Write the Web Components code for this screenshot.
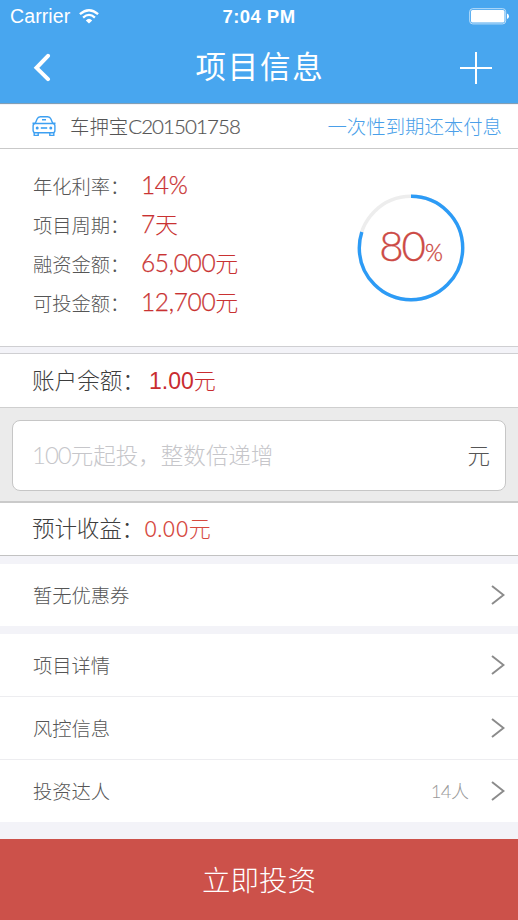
<!DOCTYPE html>
<html lang="zh-CN">
<head>
<meta charset="utf-8">
<title>项目信息</title>
<style>
body{margin:0;background:#f3f3f8;font-family:"Noto Sans CJK SC",sans-serif;font-weight:300;color:#555;overflow:hidden}
</style>
</head>
<body>
<invest-page></invest-page>
<script>
function define(name, html){
  const t=document.createElement('template');t.innerHTML=html;
  customElements.define(name,class extends HTMLElement{
    constructor(){super();this.attachShadow({mode:'open'}).appendChild(t.content.cloneNode(true));}
    connectedCallback(){
      this.shadowRoot.querySelectorAll('[data-attr]').forEach(e=>{e.textContent=this.getAttribute(e.dataset.attr)||'';});
    }
  });
}
define('status-bar',`<style>
:host{display:grid;grid-template-columns:1fr auto 1fr;align-items:center;height:33px;color:#fff;font-family:"Liberation Sans",sans-serif}
.l{display:flex;align-items:center;gap:9px;padding-left:10px;font-size:19.5px;font-weight:400}
.l span{letter-spacing:.1px}
.t{font-size:18.5px;font-weight:700;letter-spacing:.45px}
.b{justify-self:end;margin-right:8px;display:block}
svg{display:block}
</style>
<div class="l"><span>Carrier</span><svg width="20" height="15" viewBox="0 0 20 15" fill="none" stroke="#fff" stroke-width="2.3"><path d="M.9 5.2Q10-2.8 19.1 5.2M4.1 8.6Q10 3.2 15.9 8.6"/><path d="M6.8 11.4Q10 8.2 13.2 11.4L10 14.6Z" fill="#fff" stroke="none"/></svg></div>
<span class="t">7:04 PM</span>
<svg class="b" width="41" height="17" viewBox="0 0 41 17"><rect x=".7" y=".7" width="36" height="15.2" rx="3" fill="none" stroke="#bfe0fa" stroke-width="1"/><rect x="2" y="2" width="33.5" height="12.5" rx="1.5" fill="#fff"/><path d="M38 5.5Q40 6 40 8.2T38 11Z" fill="#fff"/></svg>`);
define('nav-bar',`<style>
:host{display:grid;grid-template-columns:1fr auto 1fr;align-items:center;height:70px;color:#fff}
.h{font-size:30.5px;font-weight:400;letter-spacing:1.8px;line-height:64px;height:70px;margin-right:-2px}
svg{display:block}.b{margin-left:32px}.p{justify-self:end;margin-right:26px}
</style>
<svg class="b" width="20" height="30" viewBox="0 0 20 30" fill="none" stroke="#fff" stroke-width="4" stroke-linecap="round" stroke-linejoin="miter"><path d="M16 2.8 4.5 14.8 16 26.2"/></svg>
<span class="h"><slot></slot></span>
<svg class="p" width="32" height="32" viewBox="0 0 32 32" stroke="#fff" stroke-width="2"><path d="M0 16h32M16 0v32"/></svg>`);
define('project-title',`<style>
:host{display:flex;align-items:center;height:43px;box-sizing:content-box;background:#fff;border-bottom:1px solid #c9c9c9;padding:0 16px 0 32px;font-size:19.4px}
.n,.r{margin-top:-2px}.n{margin-left:14px}.d{font-family:Lato,sans-serif;font-size:20.5px;letter-spacing:-.9px;font-weight:300;-webkit-text-stroke:.2px}
.r{margin-left:auto;color:#4a9fe9}svg{display:block}
</style>
<svg width="24" height="21" viewBox="0 0 24 21" fill="none" stroke="#3da0f2" stroke-width="1.4"><path d="M3.2 7.5 5.1 3Q6 .8 8.3.8h7.4Q18 .8 18.9 3l1.9 4.5M.5 7.2h2.4M21.1 7.2h2.4"/><rect x="1.1" y="7.5" width="21.8" height="9.3" rx="2.2"/><path d="M2.2 17v2.4h4V17M17.8 17v2.4h4V17M10 3.7h4"/><path d="M8.8 12h6.4" stroke-width="1.6"/><circle cx="5.2" cy="12" r=".8"/><circle cx="18.8" cy="12" r=".8"/></svg>
<span class="n">车押宝<span class="d">C201501758</span></span><span class="r">一次性到期还本付息</span>`);
define('detail-item',`<style>
:host{display:grid;grid-template-columns:108px 1fr;height:39px;align-items:center;font-size:19.3px;line-height:39px}
.v{color:#c93232;font-size:23px;margin-top:-4px}
::slotted(b){font-family:Lato,sans-serif;font-weight:300;font-size:24.5px;letter-spacing:-.35px;-webkit-text-stroke:.25px}
</style><span data-attr="label"></span><span class="v"><slot></slot></span>`);
define('progress-ring',`<style>
:host{display:grid;width:108px;height:108px;place-items:center}
svg,.t{grid-area:1/1}svg{display:block}
.t{color:#cc4a45;font-family:Lato,sans-serif;font-weight:300;font-size:42px;line-height:1;letter-spacing:-2px;margin-top:-6px;white-space:nowrap;-webkit-text-stroke:.35px}
small{font-size:23px;letter-spacing:0;margin-left:1px}
</style><svg width="108" height="108" viewBox="0 0 108 108" fill="none" stroke-width="3.4"><circle cx="54" cy="54" r="51.7" stroke="#ededed"/><circle cx="54" cy="54" r="51.7" stroke="#2c9bf6" pathLength="100" stroke-dasharray="80 20" transform="rotate(-90 54 54)"/></svg><span class="t">80<small>%</small></span>`);
define('project-details',`<style>
:host{display:flex;justify-content:space-between;box-sizing:border-box;height:198px;background:#fff;border-bottom:1px solid #cfcfd2;padding:18px 53px 0 33px}
.ring{padding-top:27px}
</style><div>
<detail-item label="年化利率："><b>14%</b></detail-item>
<detail-item label="项目周期："><b>7</b>天</detail-item>
<detail-item label="融资金额："><b>65,000</b>元</detail-item>
<detail-item label="可投金额："><b>12,700</b>元</detail-item></div>
<div class="ring"><progress-ring></progress-ring></div>`);
define('amount-row',`<style>
:host{display:flex;align-items:center;box-sizing:border-box;height:54px;background:#fff;padding:0 0 2px 32px;font-size:22.6px;color:#3d3d3d;line-height:50px}
.l{width:var(--label,117px);letter-spacing:var(--ls,0);white-space:nowrap}.v{color:var(--value,#c92c30);font-size:22px}
::slotted(b){font-family:var(--num,"Liberation Sans"),sans-serif;font-weight:var(--w,400);font-size:var(--fs,23px)}
</style><span class="l" data-attr="label"></span><span class="v"><slot></slot></span>`);
define('amount-input',`<style>
:host{display:block;box-sizing:border-box;height:96px;background:#ebebeb;border-top:1px solid #cfcfcf;border-bottom:2px solid #cacaca;padding:12px 12px 0 12px}
.f{display:flex;justify-content:space-between;align-items:center;box-sizing:border-box;height:71px;background:#fff;border:1.5px solid #c6c6c6;border-radius:8px;padding:0 15px 3px 19px;font-size:22.5px}
.p{color:#c6c6ca;font-weight:300}.p i{font-style:normal;font-family:Lato,sans-serif;font-weight:300;font-size:24px;letter-spacing:-1px}
</style><div class="f"><span class="p"><i>100</i>元起投，整数倍递增</span><span>元</span></div>`);
define('menu-row',`<style>
:host{display:flex;align-items:center;box-sizing:border-box;height:63px;background:#fff;padding:0 13px 0 33px;font-size:19.3px;border-bottom:1px solid #ededf0}
.n{margin-left:auto;margin-right:22px;color:#999;font-size:18px;margin-top:-3px}
::slotted(b){font-family:Lato,sans-serif;font-weight:300;font-size:18.5px;letter-spacing:-.6px}
svg{display:block}
</style><span data-attr="label"></span><span class="n"><slot></slot></span><svg width="14" height="20" viewBox="0 0 14 20" fill="none" stroke="#8b8b8b" stroke-width="2"><path d="M1 1 12.5 10 1 19"/></svg>`);
define('invest-button',`<style>
:host{display:flex;align-items:center;justify-content:center;box-sizing:border-box;height:81px;background:#cc514a;color:#fff;font-size:28.5px;font-weight:300;padding-bottom:2px}
</style><slot></slot>`);
define('invest-page',`<style>
:host{display:flex;flex-direction:column;width:518px;height:920px}
header{background:#48a6ef;height:103px;border-bottom:1px solid #829fb5;margin-bottom:1px}
.acct{border-top:1px solid #cfcfd2;margin-top:6px}
.exp{--label:112px;--ls:-.2px;--value:#d6493f;--w:300;--num:"Inter";--fs:21.5px;border-bottom:1px solid #c2c2c2;height:53px}
.one{margin:8px 0;border-bottom:0;height:62px}.last{border-bottom:0;height:62px}
invest-button{margin-top:auto}
</style>
<header><status-bar></status-bar><nav-bar>项目信息</nav-bar></header>
<project-title></project-title>
<project-details></project-details>
<amount-row class="acct" label="账户余额："><b>1.00</b>元</amount-row>
<amount-input></amount-input>
<amount-row class="exp" label="预计收益："><b>0.00</b>元</amount-row>
<menu-row class="one" label="暂无优惠券"></menu-row>
<menu-row label="项目详情"></menu-row>
<menu-row label="风控信息"></menu-row>
<menu-row class="last" label="投资达人"><b>14</b>人</menu-row>
<invest-button>立即投资</invest-button>`);
</script>
</body>
</html>
